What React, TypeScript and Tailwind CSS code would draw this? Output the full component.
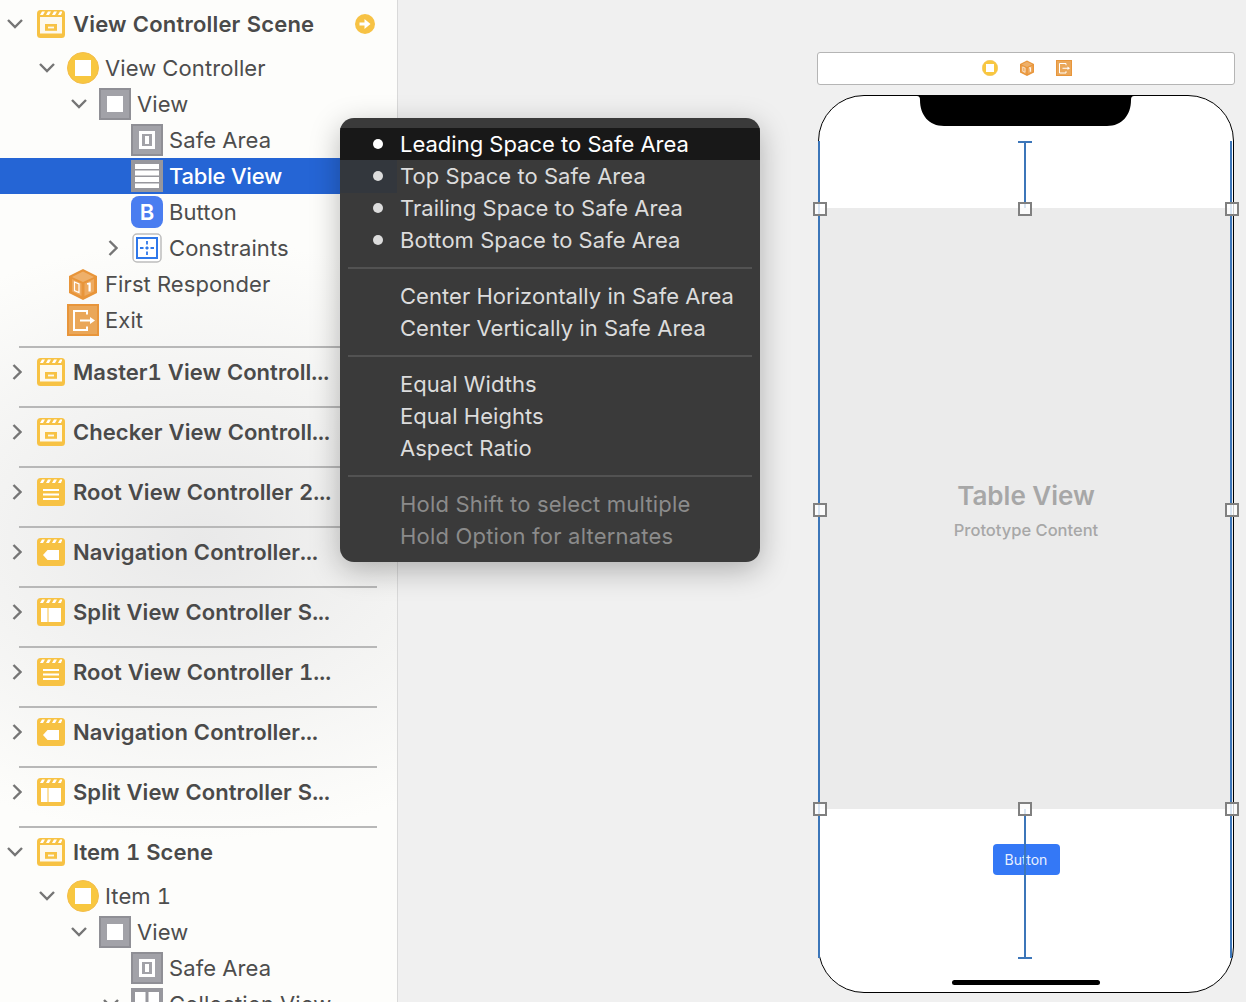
import React from 'react';

const YELLOW = '#f7c244';

const Stripes = () => (
  <g fill="#fff">
    <polygon points="3,5 5,1.5 8,1.5 6,5" />
    <polygon points="9,5 11,1.5 14,1.5 12,5" />
    <polygon points="15,5 17,1.5 20,1.5 18,5" />
    <polygon points="21,5 23,1.5 25,1.5 25,2.5 24,5" />
  </g>
);

type SceneKind = 'plain' | 'table' | 'nav' | 'split';

const SceneIcon: React.FC<{ kind: SceneKind }> = ({ kind }) => (
  <svg viewBox="0 0 28 28" className="h-[28px] w-[28px] shrink-0">
    <rect width="28" height="28" rx="3.5" fill={YELLOW} />
    <Stripes />
    {kind === 'plain' && (
      <>
        <rect x="3" y="7" width="22" height="16.5" fill="#fdf9ee" />
        <rect x="8" y="14" width="12" height="6.8" fill={YELLOW} />
        <rect x="11" y="16.6" width="6" height="1.8" fill="#fdf9ee" />
      </>
    )}
    {kind === 'table' && (
      <>
        <rect x="6" y="11" width="16" height="2" fill="#fff" />
        <rect x="6" y="15.5" width="16" height="2" fill="#fff" />
        <rect x="6" y="20" width="16" height="2" fill="#fff" />
      </>
    )}
    {kind === 'nav' && <polygon points="6,17 10.5,12 22,12 22,22 10.5,22" fill="#fff" />}
    {kind === 'split' && (
      <>
        <rect x="4" y="10" width="6.5" height="14" fill="#fff" />
        <rect x="11.5" y="10" width="12.5" height="14" fill="#fff" />
      </>
    )}
  </svg>
);

const ControllerIcon: React.FC<{ className?: string }> = ({ className = 'h-[32px] w-[32px]' }) => (
  <svg viewBox="0 0 32 32" className={`${className} shrink-0`}>
    <circle cx="16" cy="16" r="15.5" fill="#f8c740" stroke="#f3bd4b" />
    <rect x="8" y="8" width="16" height="16" fill="#fff" />
  </svg>
);

const ViewIcon = () => (
  <svg viewBox="0 0 32 32" className="h-[32px] w-[32px] shrink-0">
    <rect width="32" height="32" fill="#a2a2a8" />
    <rect x="1" y="1" width="30" height="30" fill="none" stroke="#8f8f95" strokeWidth="2" />
    <rect x="8" y="8" width="16" height="16" fill="#fff" />
  </svg>
);

const SafeAreaIcon = () => (
  <svg viewBox="0 0 32 32" className="h-[32px] w-[32px] shrink-0">
    <rect width="32" height="32" fill="#a2a2a8" />
    <rect x="1" y="1" width="30" height="30" fill="none" stroke="#8f8f95" strokeWidth="2" />
    <rect x="8" y="7" width="16" height="18" fill="#fff" />
    <rect x="11" y="10" width="10" height="12" fill="#a2a2a8" />
    <rect x="14" y="12" width="4" height="8" fill="#fff" />
  </svg>
);

const TableIcon = () => (
  <svg viewBox="0 0 32 32" className="h-[32px] w-[32px] shrink-0">
    <rect width="32" height="32" fill="#97979d" />
    <rect x="4" y="4" width="24" height="5" fill="#fff" />
    <rect x="4" y="10.5" width="24" height="5" fill="#fff" />
    <rect x="4" y="17" width="24" height="5" fill="#fff" />
    <rect x="4" y="23.5" width="24" height="4.5" fill="#fff" />
  </svg>
);

const CollectionIcon = () => (
  <svg viewBox="0 0 32 32" className="h-[32px] w-[32px] shrink-0">
    <rect width="32" height="32" fill="#97979d" />
    <rect x="4" y="4" width="10.5" height="24" fill="#fff" />
    <rect x="17.5" y="4" width="10.5" height="24" fill="#fff" />
  </svg>
);

const ButtonIcon = () => (
  <span className="flex h-[32px] w-[32px] shrink-0 items-center justify-center rounded-[8px] bg-[#4a7df0] text-[22px] font-semibold text-white">
    B
  </span>
);

const ConstraintsIcon = () => (
  <span className="flex h-[32px] w-[32px] shrink-0 items-center justify-center">
    <svg viewBox="0 0 30 30" className="h-[30px] w-[30px]">
      <rect x="1" y="1" width="28" height="28" rx="4" fill="#fff" stroke="#bdbdbd" strokeWidth="1.5" />
      <rect x="5" y="5" width="20" height="20" fill="none" stroke="#2f78ea" strokeWidth="2" />
      <path d="M15 8v3.5M15 13.5v3M15 18.5v3.5M8 15h3.5M13.5 15h3M18.5 15h3.5" stroke="#2f78ea" strokeWidth="1.8" />
    </svg>
  </span>
);

const CubeIcon: React.FC<{ className?: string }> = ({ className = 'h-[32px] w-[32px]' }) => (
  <svg viewBox="0 0 32 32" className={`${className} shrink-0`}>
    <polygon points="16,1 30,8 30,25 16,32 2,25 2,8" fill="#e8953a" />
    <polygon points="16,3.5 27,9 16,14 5,9" fill="#eeb06a" />
    <polygon points="5,11 14.5,15.5 14.5,28 5,23.5" fill="#eeaa5f" />
    <polygon points="27,11 17.5,15.5 17.5,28 27,23.5" fill="#eeaa5f" />
    <polygon points="7.5,14 12,16 12,24.5 7.5,22.5" fill="none" stroke="#fff" strokeWidth="1.2" />
    <rect x="21.5" y="14.5" width="2.2" height="9" fill="#fff" />
    <rect x="20" y="15" width="2" height="1.6" fill="#fff" />
  </svg>
);

const ExitIcon: React.FC<{ className?: string }> = ({ className = 'h-[32px] w-[32px]' }) => (
  <svg viewBox="0 0 32 32" className={`${className} shrink-0`}>
    <rect width="32" height="32" fill="#e8953a" />
    <rect x="2" y="2" width="28" height="28" fill="#eaa759" />
    <path d="M20 10.5V7H7v19h13v-3.5" fill="none" stroke="#fff" strokeWidth="2" />
    <path d="M13 16.5h11" stroke="#fff" strokeWidth="2" />
    <polygon points="23,13 28,16.5 23,20" fill="#fff" />
  </svg>
);

const ChevronDown = () => (
  <svg viewBox="0 0 16 10" className="h-[10px] w-[16px]">
    <path d="M1 1l7 7 7-7" fill="none" stroke="#757575" strokeWidth="2.4" />
  </svg>
);

const ChevronRight = () => (
  <svg viewBox="0 0 10 16" className="h-[16px] w-[10px]">
    <path d="M1.5 1l7 7-7 7" fill="none" stroke="#757575" strokeWidth="2.4" />
  </svg>
);

const ArrowBadge = () => (
  <svg viewBox="0 0 20 20" className="ml-auto mr-[22px] h-[20px] w-[20px] shrink-0">
    <circle cx="10" cy="10" r="10" fill={YELLOW} />
    <path d="M4.5 8.5h5V5l6 5-6 5v-3.5h-5z" fill="#fff" />
  </svg>
);

const SceneRow: React.FC<{ label: string; kind: SceneKind; open?: boolean; badge?: boolean }> = ({
  label,
  kind,
  open,
  badge,
}) => (
  <div className="flex h-[36px] items-center">
    <span className={open ? 'flex w-[37px] justify-center pr-[7px]' : 'flex w-[37px] justify-center pr-[3px]'}>
      {open ? <ChevronDown /> : <ChevronRight />}
    </span>
    <SceneIcon kind={kind} />
    <span className={`ml-[8px] whitespace-nowrap font-semibold tabular-nums text-[#4a4a4a] ${badge ? 'tracking-[0.2px]' : 'tracking-[0.05px]'}`}>
      {label}
    </span>
    {badge && <ArrowBadge />}
  </div>
);

const Separator = () => <div className="mb-[6px] ml-[19px] h-[2px] w-[358px] bg-[#b8b8b8]" />;

const Collapsed: React.FC<{ label: string; kind: SceneKind }> = ({ label, kind }) => (
  <div className="h-[60px]">
    <Separator />
    <SceneRow label={label} kind={kind} />
  </div>
);

const TreeRow: React.FC<{
  indent: string;
  icon: React.ReactNode;
  label: string;
  chevron?: 'down' | 'right';
  selected?: boolean;
}> = ({ indent, icon, label, chevron, selected }) => (
  <div className={`flex h-[36px] items-center ${indent} ${selected ? 'bg-[#2565d5] text-white' : 'text-[#4d4d4d]'}`}>
    <span className={chevron === 'right' ? 'flex w-[30px] pl-[7px]' : 'flex w-[30px] pl-[2px]'}>
      {chevron === 'down' && <ChevronDown />}
      {chevron === 'right' && <ChevronRight />}
    </span>
    {icon}
    <span className={selected ? 'ml-[6px] whitespace-nowrap font-medium tracking-[-0.2px]' : 'ml-[6px] whitespace-nowrap tabular-nums tracking-[0.1px]'}>
      {label}
    </span>
  </div>
);

const Sidebar = () => (
  <aside className="h-full w-[398px] shrink-0 overflow-hidden border-r border-[#d9d9d9] bg-[radial-gradient(ellipse_420px_300px_at_200px_540px,#e9e9e9,#fdfdfb)] pt-[6px] text-[22px]">
    <SceneRow label="View Controller Scene" kind="plain" open badge />
    <div className="mb-[8px] mt-[8px]">
      <TreeRow indent="pl-[37px]" chevron="down" icon={<ControllerIcon />} label="View Controller" />
      <TreeRow indent="pl-[69px]" chevron="down" icon={<ViewIcon />} label="View" />
      <TreeRow indent="pl-[101px]" icon={<SafeAreaIcon />} label="Safe Area" />
      <TreeRow indent="pl-[101px]" icon={<TableIcon />} label="Table View" selected />
      <TreeRow indent="pl-[101px]" icon={<ButtonIcon />} label="Button" />
      <TreeRow indent="pl-[101px]" chevron="right" icon={<ConstraintsIcon />} label="Constraints" />
      <TreeRow indent="pl-[37px]" icon={<CubeIcon />} label="First Responder" />
      <TreeRow indent="pl-[37px]" icon={<ExitIcon />} label="Exit" />
    </div>
    <Collapsed label="Master1 View Controll..." kind="plain" />
    <Collapsed label="Checker View Controll..." kind="plain" />
    <Collapsed label="Root View Controller 2..." kind="table" />
    <Collapsed label="Navigation Controller..." kind="nav" />
    <Collapsed label="Split View Controller S..." kind="split" />
    <Collapsed label="Root View Controller 1..." kind="table" />
    <Collapsed label="Navigation Controller..." kind="nav" />
    <Collapsed label="Split View Controller S..." kind="split" />
    <Separator />
    <SceneRow label="Item 1 Scene" kind="plain" open />
    <div className="mt-[8px]">
      <TreeRow indent="pl-[37px]" chevron="down" icon={<ControllerIcon />} label="Item 1" />
      <TreeRow indent="pl-[69px]" chevron="down" icon={<ViewIcon />} label="View" />
      <TreeRow indent="pl-[101px]" icon={<SafeAreaIcon />} label="Safe Area" />
      <TreeRow indent="pl-[101px]" chevron="down" icon={<CollectionIcon />} label="Collection View" />
    </div>
  </aside>
);

const MenuRow: React.FC<{ label: string; dot?: boolean; active?: boolean; disabled?: boolean; tint?: boolean }> = ({
  label,
  dot,
  active,
  disabled,
  tint,
}) => (
  <div
    className={`relative flex h-[32px] items-center ${active ? 'bg-[#181818] text-white' : disabled ? 'tracking-[0.2px] text-[#8b8b8b]' : 'tracking-[0.04px] text-[#dcdcdc]'}`}
  >
    {tint && <div className="absolute left-0 top-0 h-[33px] w-[57px] bg-[#33373d]" />}
    <span className="relative flex w-[60px] pl-[33px]">
      {dot && <span className={`h-[10px] w-[10px] rounded-full ${active ? 'bg-white' : 'bg-[#dcdcdc]'}`} />}
    </span>
    <span className="relative whitespace-nowrap">{label}</span>
  </div>
);

const MenuDivider = () => <div className="mx-[8px] my-[11px] h-[2px] bg-[#525252]" />;

const ConstraintMenu = () => (
  <div className="absolute left-[340px] top-[118px] h-[444px] w-[420px] overflow-hidden rounded-[14px] bg-[#3a3a3a] pt-[10px] text-[22px] shadow-[0_8px_30px_rgba(0,0,0,0.28)]">
    <MenuRow label="Leading Space to Safe Area" dot active />
    <MenuRow label="Top Space to Safe Area" dot tint />
    <MenuRow label="Trailing Space to Safe Area" dot />
    <MenuRow label="Bottom Space to Safe Area" dot />
    <MenuDivider />
    <MenuRow label="Center Horizontally in Safe Area" />
    <MenuRow label="Center Vertically in Safe Area" />
    <MenuDivider />
    <MenuRow label="Equal Widths" />
    <MenuRow label="Equal Heights" />
    <MenuRow label="Aspect Ratio" />
    <MenuDivider />
    <MenuRow label="Hold Shift to select multiple" disabled />
    <MenuRow label="Hold Option for alternates" disabled />
  </div>
);

const Handle: React.FC<{ className: string }> = ({ className }) => (
  <div className={`absolute h-[14px] w-[14px] border-[2px] border-[#808080] bg-white/80 ${className}`} />
);

const Notch = () => (
  <svg viewBox="0 0 219 32" className="absolute left-[98px] top-0 h-[32px] w-[219px]">
    <path d="M0 1h1c2 0 3 1 3 4 0 15 9 26 24 26h163c15 0 24-11 24-26 0-3 1-4 3-4h1V0H0z" fill="#000" />
  </svg>
);

const Phone = () => (
  <div className="relative ml-px mt-[10px] h-[898px] w-[416px]">
    <div className="flex h-full flex-col overflow-hidden rounded-[46px] border border-black bg-white">
      <div className="h-[112px] shrink-0" />
      <div className="flex h-[601px] shrink-0 flex-col items-center bg-[#ebebeb] pt-[270px] text-[#a7a7a7]">
        <div className="text-[26px] font-semibold leading-[36px]">Table View</div>
        <div className="mt-[4px] text-[16.5px] font-medium leading-[24px]">Prototype Content</div>
      </div>
      <div className="flex justify-center pt-[35px]">
        <div className="flex h-[31px] w-[67px] items-center justify-center rounded-[4px] bg-[#3478f6] text-[14px] text-[#e8f0ff]">
          Button
        </div>
      </div>
      <div className="mx-auto mt-[105px] h-[5px] w-[148px] rounded-full bg-black" />
    </div>

    <Notch />

    <div className="absolute left-0 top-[46px] h-[817px] w-[2px] bg-[#3c76b9]" />
    <div className="absolute left-[412px] top-[46px] h-[817px] w-[2px] bg-[#3c76b9]" />
    <div className="absolute left-[206px] top-[46px] h-[67px] w-[2px] bg-[#3c76b9]" />
    <div className="absolute left-[206px] top-[714px] h-[149px] w-[2px] bg-[#3c76b9]" />
    <div className="absolute left-[200px] top-[46px] h-[2px] w-[14px] bg-[#3c76b9]" />
    <div className="absolute left-[200px] top-[862px] h-[2px] w-[14px] bg-[#3c76b9]" />

    <Handle className="-left-[5px] top-[107px]" />
    <Handle className="left-[200px] top-[107px]" />
    <Handle className="left-[407px] top-[107px]" />
    <Handle className="-left-[5px] top-[408px]" />
    <Handle className="left-[407px] top-[408px]" />
    <Handle className="-left-[5px] top-[707px]" />
    <Handle className="left-[200px] top-[707px]" />
    <Handle className="left-[407px] top-[707px]" />
  </div>
);

const Canvas = () => (
  <main className="h-full flex-1 overflow-hidden bg-[#f0f0f0] pl-[419px] pt-[52px]">
    <div className="flex h-[33px] w-[418px] items-center justify-center gap-[21px] rounded-[3px] border border-[#b5b5b5] bg-white pb-[2px] pl-[2px]">
      <ControllerIcon className="h-[16px] w-[16px]" />
      <CubeIcon className="h-[16px] w-[16px]" />
      <ExitIcon className="h-[16px] w-[16px]" />
    </div>
    <Phone />
  </main>
);

export default function App() {
  return (
    <div className="relative flex h-[1002px] w-[1246px] overflow-hidden font-['Inter',sans-serif]">
      <Sidebar />
      <Canvas />
      <ConstraintMenu />
    </div>
  );
}
